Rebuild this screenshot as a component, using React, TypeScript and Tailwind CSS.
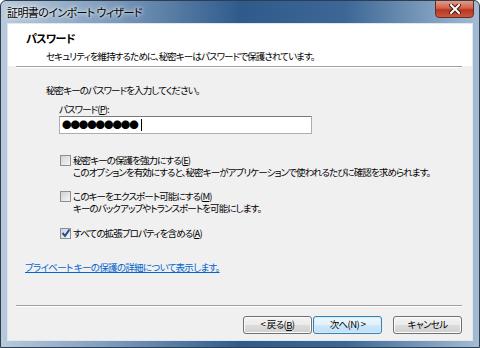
const jp = "font-['Meiryo_UI','Noto_Sans_CJK_JP',sans-serif] [font-feature-settings:'palt']";

function Checkbox({ checked = false }: { checked?: boolean }) {
  return (
    <div className="relative w-[11px] h-[11px] mt-[1px] shrink-0 border border-[#8e8f8f] bg-[linear-gradient(135deg,#d2d2d2,#f6f6f6)]">
      {checked && (
        <svg className="absolute left-[0px] top-[-1px]" width="10" height="10" viewBox="0 0 10 10">
          <path d="M1.5 5 L4 7.8 L8.5 1.5" fill="none" stroke="#1d4f98" strokeWidth="2" />
        </svg>
      )}
    </div>
  );
}

function Key({ k }: { k: string }) {
  return <span className="inline-block leading-[12px] underline">{k}</span>;
}

function Button({ label, primary = false }: { label: React.ReactNode; primary?: boolean }) {
  return (
    <button
      className={
        'h-[18px] w-[69px] rounded-[3px] border text-[9.5px] leading-none tracking-[-0.6px] text-black flex items-center justify-center ' +
        (primary
          ? 'border-[#3c7fb1] bg-[linear-gradient(#eef7fd_0%,#e2f1fb_50%,#cfe7f8_51%,#bfdff6_100%)] shadow-[inset_0_0_0_1px_#cfeefd]'
          : 'border-[#707070] bg-[linear-gradient(#f3f3f3_0%,#ebebeb_50%,#dddddd_51%,#cfcfcf_100%)] shadow-[inset_0_0_0_1px_#fcfcfc]')
      }
    >
      {label}
    </button>
  );
}

export default function App() {
  return (
    <div
      className={`w-[480px] h-[348px] flex flex-col overflow-hidden rounded-t-[6px] border border-[#2e3d4f] bg-[linear-gradient(to_right,#b9cadb_0%,#7f9dbd_22%,#2f5b8c_50%,#3c6796_72%,#a4bcd3_100%)] ${jp}`}
    >
      {/* Title bar */}
      <div className="relative h-[22px] shrink-0 flex items-center pl-[6px]">
        <span className="text-[11px] tracking-[-0.6px] text-black [text-shadow:0_0_6px_#ffffff,0_0_3px_#ffffff]">
          証明書のインポート ウィザード
        </span>
        <div className="absolute top-[-1px] right-[5px] w-[39px] h-[18px] rounded-b-[4px] border border-[#6b2a20] bg-[linear-gradient(#e49a86_0%,#d3614a_45%,#b8361f_55%,#c9583f_100%)] flex items-center justify-center">
          <svg width="12" height="10" viewBox="0 0 12 10">
            <path d="M2 1 L10 9 M10 1 L2 9" stroke="#3b1a14" strokeWidth="4" strokeLinecap="square" />
            <path d="M2 1 L10 9 M10 1 L2 9" stroke="#ffffff" strokeWidth="2" strokeLinecap="square" />
          </svg>
        </div>
      </div>

      {/* Client area */}
      <div className="mx-[6px] mb-[6px] flex-1 flex flex-col border border-[#dfe7ef] bg-[#f0f0f0] text-[9.5px] text-black tracking-[-0.9px]">
        {/* Header */}
        <div className="h-[42px] shrink-0 bg-white flex flex-col">
          <div className="pl-[18px] pt-[7px] leading-[14px] font-bold text-[11px] tracking-[-0.6px]">パスワード</div>
          <div className="pl-[38px] mt-[4px] leading-[14px]">
            セキュリティを維持するために、秘密キーはパスワードで保護されています。
          </div>
        </div>
        <div className="ml-[8px] mr-[10px] h-[2px] border-t border-[#a0a0a0] border-b border-b-white" />

        {/* Body */}
        <div className="flex-1 flex flex-col">
          <div className="pl-[38px] mt-[15px] leading-[14px]">秘密キーのパスワードを入力してください。</div>
          <div className="pl-[51px] mt-[5px] leading-[14px]">
            パスワード(<Key k="P" />):
          </div>
          <div className="ml-[51px] w-[253px] h-[18px] border border-[#abadb3] border-t-[#7a7a7a] bg-white flex items-center pl-[2px]">
            <span className="text-[9.5px] leading-none tracking-[-1.1px] font-['Noto_Sans_CJK_JP',sans-serif]">●●●●●●●●●</span>
            <span className="ml-[3px] w-[1px] h-[12px] bg-black" />
          </div>

          <div className="ml-[52px] mt-[20px] flex gap-[2px]">
            <Checkbox />
            <div className="leading-[12px]">
              <div>
                秘密キーの保護を強力にする(<Key k="E" />)
              </div>
              <div>このオプションを有効にすると、秘密キーがアプリケーションで使われるたびに確認を求められます。</div>
            </div>
          </div>

          <div className="ml-[52px] mt-[12px] flex gap-[2px]">
            <Checkbox />
            <div className="leading-[12px]">
              <div>
                このキーをエクスポート可能にする(<Key k="M" />)
              </div>
              <div>キーのバックアップやトランスポートを可能にします。</div>
            </div>
          </div>

          <div className="ml-[52px] mt-[13px] flex gap-[2px]">
            <Checkbox checked />
            <div className="leading-[12px]">
              すべての拡張プロパティを含める(<Key k="A" />)
            </div>
          </div>

          <div className="pl-[17px] mt-[21px] leading-[14px] text-[#0066cc] underline tracking-[-0.7px]">
            プライベート キーの保護の詳細について表示します。
          </div>

          <div className="mt-auto ml-[8px] mr-[10px] h-[2px] border-t border-[#a0a0a0] border-b border-b-white" />

          {/* Buttons */}
          <div className="h-[33px] flex items-start pt-[9px] pl-[235px]">
            <Button label={<>&lt; 戻る(<Key k="B" />)</>} />
            <div className="ml-[1px]">
              <Button label="次へ(N) >" primary />
            </div>
            <div className="ml-[11px]">
              <Button label="キャンセル" />
            </div>
          </div>
        </div>
      </div>
    </div>
  );
}
